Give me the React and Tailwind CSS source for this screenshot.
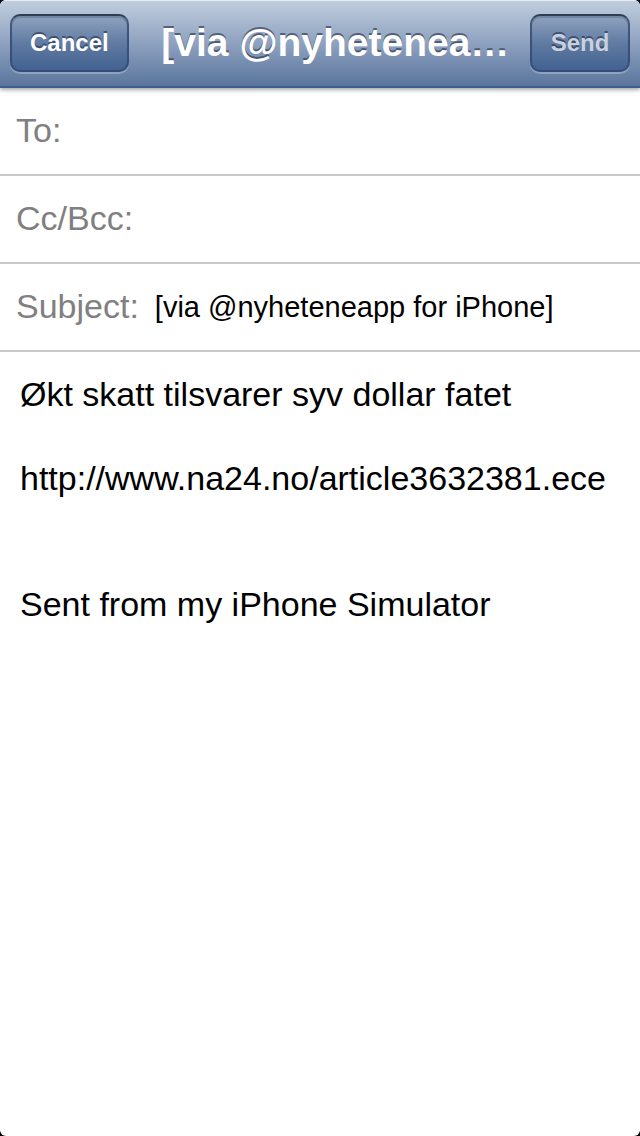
import { useState } from "react";

const BODY = `Økt skatt tilsvarer syv dollar fatet

http://www.na24.no/article3632381.ece


Sent from my iPhone Simulator`;

const TITLE_LENGTH = 15;

function shorten(text) {
  return text.length > TITLE_LENGTH ? `${text.slice(0, TITLE_LENGTH)}…` : text;
}

function BarButton({ children, ...props }) {
  return (
    <button
      type="button"
      className="h-[58px] min-w-[100px] shrink-0 rounded-[10px] border-2 border-[#2f4a72]/80 border-t-[#323e50] bg-linear-to-b from-[#93a6c1] via-[#617ba2] to-[#40608f] bg-origin-border px-[18px] text-2xl font-bold text-white shadow-[0_2px_0_rgba(255,255,255,0.25),inset_0_2px_1px_rgba(30,45,70,0.25)] [text-shadow:0_-2px_0_rgba(30,45,70,0.6)] disabled:text-[#c9d1de]"
      {...props}
    >
      {children}
    </button>
  );
}

function FieldRow({ id, label, value, onChange }) {
  return (
    <div className="flex h-[88px] items-center gap-4 border-b-2 border-[#c8c8c8] px-4 pb-0.5">
      <label htmlFor={id} className="shrink-0 text-[34px] leading-10 text-[#808080]">
        {label}
      </label>
      <input
        id={id}
        type="text"
        value={value}
        onChange={(e) => onChange(e.target.value)}
        className="mt-1 h-10 min-w-0 flex-1 bg-transparent text-[29px] text-black outline-none"
      />
    </div>
  );
}

export default function App() {
  const [to, setTo] = useState("");
  const [cc, setCc] = useState("");
  const [subject, setSubject] = useState("[via @nyheteneapp for iPhone]");
  const [body, setBody] = useState(BODY);

  return (
    <div className="min-h-screen bg-black font-['Liberation_Sans',Arial,sans-serif]">
      <form className="flex min-h-screen flex-col overflow-hidden rounded-[6px] bg-white">
        <header className="z-10 flex h-[88px] items-center border-t border-b-2 border-t-[#e6ebf1] border-b-[#3f5f8c] bg-linear-to-b from-[#c0cddd] via-[#8ea1bf] via-50% to-[#5a759d] px-2.5 pb-px shadow-[0_2px_4px_rgba(0,0,0,0.35)]">
          <BarButton>Cancel</BarButton>
          <h1 className="ml-3 min-w-0 flex-1 text-center text-[39px] leading-[52px] font-bold whitespace-nowrap text-white [text-shadow:0_-2px_0_rgba(40,52,72,0.65)]">
            {shorten(subject)}
          </h1>
          <BarButton disabled={!to}>Send</BarButton>
        </header>
        <main className="flex flex-1 flex-col">
          <FieldRow id="to" label="To:" value={to} onChange={setTo} />
          <FieldRow id="cc" label="Cc/Bcc:" value={cc} onChange={setCc} />
          <FieldRow id="subject" label="Subject:" value={subject} onChange={setSubject} />
          <textarea
            aria-label="Message"
            value={body}
            onChange={(e) => setBody(e.target.value)}
            className="w-full flex-1 resize-none bg-transparent px-5 pt-[21px] text-[34px] leading-[42px] text-black outline-none"
          />
        </main>
      </form>
    </div>
  );
}
